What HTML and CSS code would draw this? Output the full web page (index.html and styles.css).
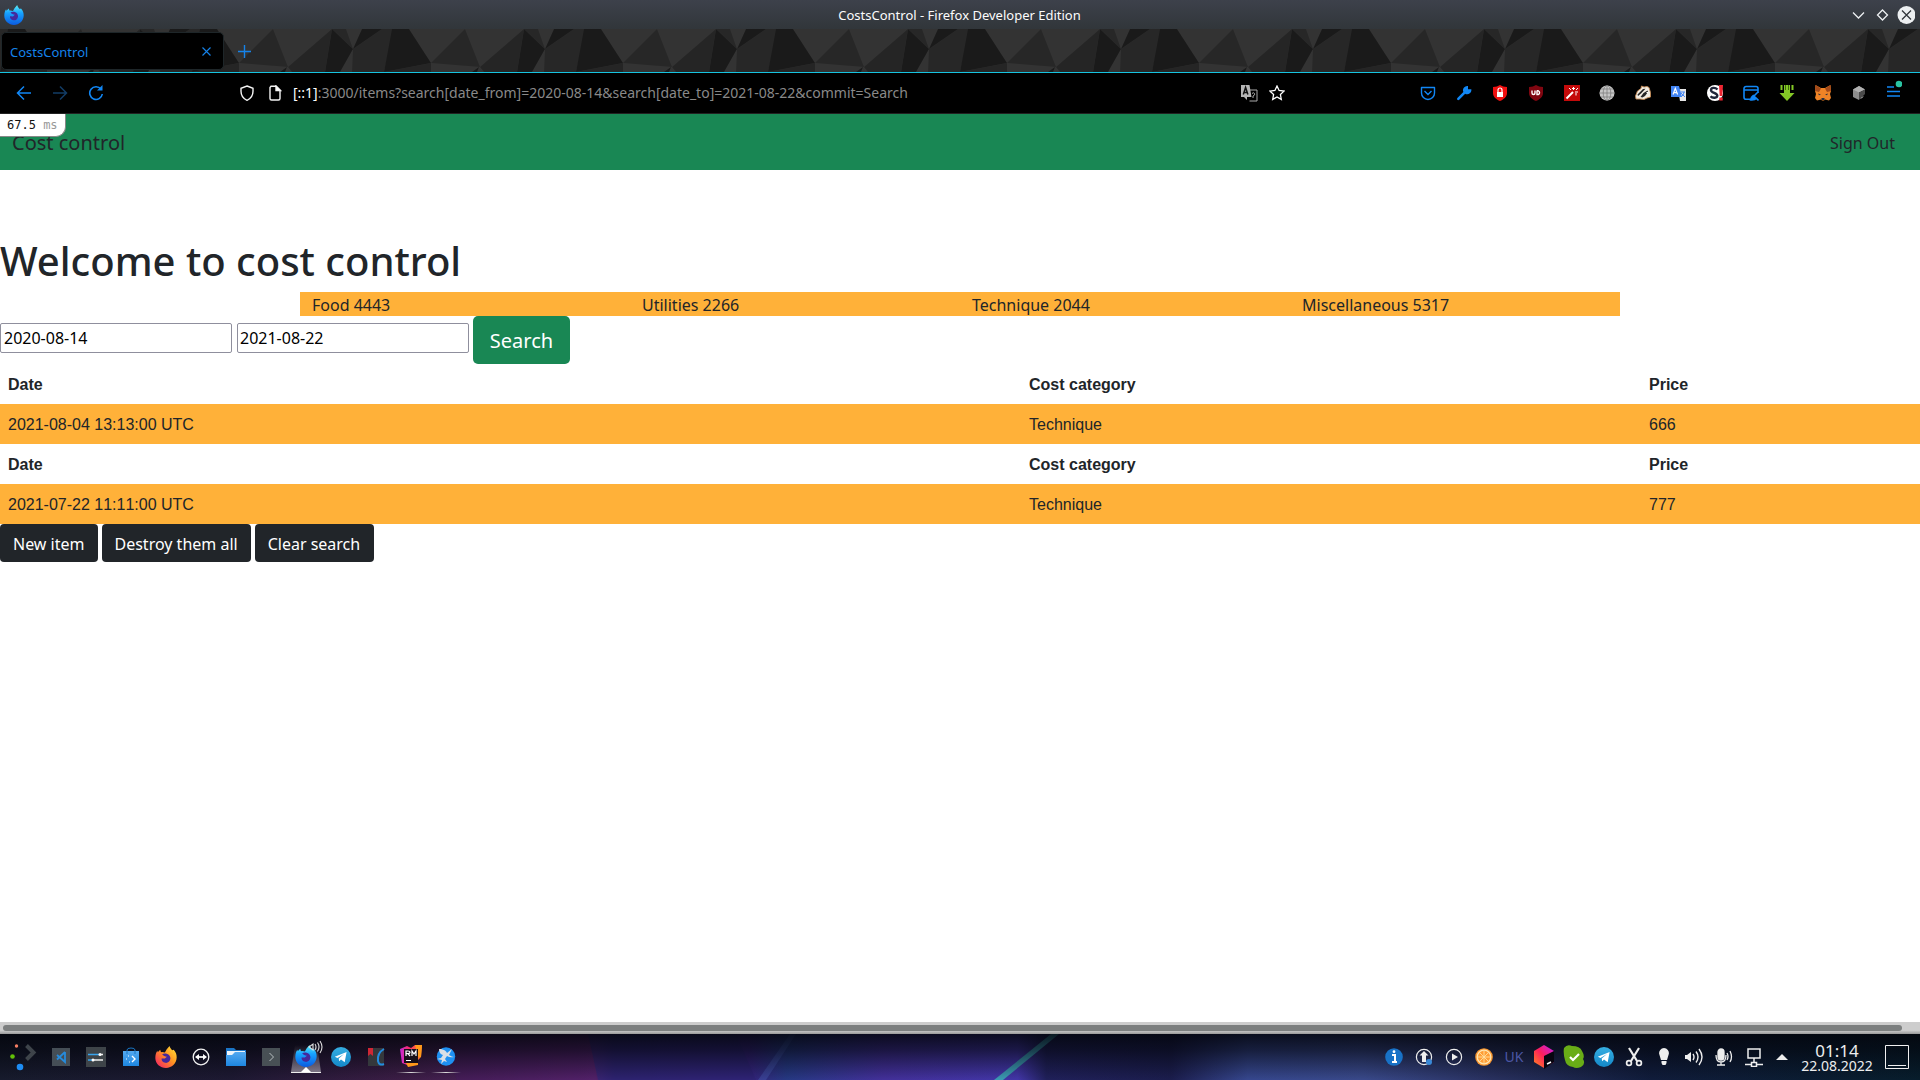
FILE: index.html
```html
<!DOCTYPE html>
<html lang="en">
<head>
<meta charset="utf-8">
<title>CostsControl</title>
<link rel="stylesheet" href="styles.css">
</head>
<body>
<svg class="defs" width="0" height="0">
  <defs>
    <linearGradient id="blueFox" x1="0" y1="0" x2="0" y2="1"><stop offset="0" stop-color="#5df0f5"/><stop offset=".4" stop-color="#17a3ff"/><stop offset="1" stop-color="#0b5be0"/></linearGradient>
    <linearGradient id="fireFox" x1="1" y1="0" x2="0" y2="1"><stop offset="0" stop-color="#ffe83c"/><stop offset=".45" stop-color="#ff9420"/><stop offset="1" stop-color="#f5156c"/></linearGradient>
    <linearGradient id="jet" x1="0" y1="1" x2="1" y2="0"><stop offset="0" stop-color="#ff8a1d"/><stop offset=".5" stop-color="#fe1f5b"/><stop offset="1" stop-color="#c21ff5"/></linearGradient>
    <linearGradient id="rm" x1="0" y1="0" x2="1" y2="0"><stop offset="0" stop-color="#c42bd8"/><stop offset=".4" stop-color="#fb2a6a"/><stop offset="1" stop-color="#ff8a25"/></linearGradient>
    <linearGradient id="tg" x1="0" y1="0" x2="0" y2="1"><stop offset="0" stop-color="#35aee2"/><stop offset="1" stop-color="#1488c8"/></linearGradient>
    <linearGradient id="folder" x1="0" y1="0" x2="0" y2="1"><stop offset="0" stop-color="#54a9f0"/><stop offset="1" stop-color="#1d86e0"/></linearGradient>
    <linearGradient id="line"><stop offset="0" stop-color="#ddd" stop-opacity="0"/><stop offset=".5" stop-color="#ddd"/><stop offset="1" stop-color="#ddd" stop-opacity="0"/></linearGradient>
    <linearGradient id="glow" x1="0" y1="0" x2="0" y2="1"><stop offset="0" stop-color="#fff" stop-opacity="0"/><stop offset="1" stop-color="#fff" stop-opacity=".4"/></linearGradient>
    <symbol id="fox" viewBox="0 0 20 20"><path d="M10.500 3.200 13.200 0c.2 1.300 1.200 2.500 2.500 3.900L17 3.500c1.800 1.900 2.800 4.200 2.700 7C19.500 16 15.300 19.900 10 19.900S.3 16 .3 10.800c0-2.700.7-4.900 1.800-6.500l.4 1.400 2.200-2.300.8 2.200c1.300-.2 2.500 0 3.500.4z"/><path d="M6.500 7.500c3-2 8 .2 7.500 4.200-.4 2.700-2.600 4-4.700 3.600-2.300-.4-3.600-2.200-3.300-4l3 .1 1.800-1.700c-1.700-.2-3.300-.6-4.300-2.200z" fill="#45279c"/></symbol>
    <symbol id="plane" viewBox="0 0 20 20"><circle cx="10" cy="10" r="10" fill="url(#tg)"/><path d="M3.800 9.800 15.600 5 13.700 15.200 10 12.600 8.200 14.300 7.700 11.600 13 7 6.500 11z" fill="#fff"/></symbol>
  </defs>
</svg>

<header class="titlebar">
  <svg class="app" width="20" height="20" fill="url(#blueFox)"><use href="#fox"/></svg>
  <span class="window-title">CostsControl - Firefox Developer Edition</span>
  <svg class="window-buttons" width="64" height="20" fill="none" stroke="#eceff1" stroke-width="1.300">
    <path d="M2 7.500l5.500 5.500 5.500-5.500M31.500 5l5 5-5 5-5-5z"/><circle cx="55.500" cy="10" r="9" fill="#eceff1" stroke="none"/><path d="M51 5.500l9 9m0-9l-9 9" stroke="#31363b"/>
  </svg>
</header>

<div class="tabstrip">
  <svg class="facets" width="1920" height="43">
    <defs>
      <pattern id="facet" width="192" height="43" patternUnits="userSpaceOnUse" patternTransform="translate(47 0)">
        <rect width="192" height="43" fill="#333"/>
        <path d="M0 34 34 0 49 38zM93 0h14l7 20zM114 20 143 0h12l-10 43h-32z" fill="#272727"/>
        <path d="M49 38 93 0 86 43H53zM145 43 192 34V43z" fill="#252525"/>
        <path d="M93 0 114 20 101 43H86zM123 0h20L114 20zM153 0h17l22 34-47 9zM41 43l7-5-2 5z" fill="#1a1a1a"/>
      </pattern>
    </defs>
    <rect width="1920" height="43" fill="url(#facet)"/>
  </svg>
  <div class="tab"><span>CostsControl</span><svg width="9" height="9" stroke="#1583ea" stroke-width="1.100"><path d="M.5.5l8 8m0-8l-8 8"/></svg></div>
  <svg class="plus" width="13" height="13" stroke="#1583ea" stroke-width="1.400"><path d="M6.500 0v13M0 6.500h13"/></svg>
</div>

<nav class="toolbar">
  <div class="history">
    <svg width="16" height="16" fill="none" stroke="#1187f5" stroke-width="1.500"><path d="M15 8H1.500M8 1.500 1.500 8 8 14.500"/></svg>
    <svg width="16" height="16" fill="none" stroke="#123c66" stroke-width="1.500"><path d="M1 8h13.500M8 1.500 14.500 8 8 14.500"/></svg>
    <svg width="16" height="16" fill="none" stroke="#1187f5" stroke-width="1.600"><path d="M13 4.200A6.300 6.300 0 1 0 14.300 9"/><path d="M9 5.500h5.500V0z" fill="#1187f5" stroke="none"/></svg>
  </div>
  <div class="address">
    <svg width="16" height="16" fill="none" stroke="#f4f4f4" stroke-width="1.400"><path d="M8 1l6 2.300v3c0 4.200-2.600 7.500-6 9-3.400-1.500-6-4.800-6-9v-3z"/></svg>
    <svg width="14" height="16" fill="none" stroke="#f4f4f4" stroke-width="1.400"><path d="M3 1.200h5l4 4v8.300a1.500 1.500 0 0 1-1.500 1.500h-7A1.500 1.500 0 0 1 2 13.500v-11z"/><path d="M8 1v4.500h4.500z" fill="#fff"/></svg>
    <span class="url"><b>[::1]</b>:3000/items?search[date_from]=2020-08-14&amp;search[date_to]=2021-08-22&amp;commit=Search</span>
    <svg width="17" height="17"><path d="M9 5h7v11H8.500" fill="none" stroke="#aaa"/><path d="M11 8.500q1.500-1.500 2.500 0t-1.500 2.500v2" fill="none" stroke="#aaa"/><path d="M0 0h8.500l2 12H6v3l-3-3H0z" fill="#b5b5b5"/><path d="M2.300 9.500 4.600 2.500l2.300 7M3.200 7.500h3" fill="none" stroke="#111" stroke-width="1.500"/></svg>
    <svg width="16" height="16" fill="none" stroke="#fff" stroke-width="1.300"><path d="M8 1l2.100 4.500 4.900.6-3.600 3.400.9 4.900L8 12l-4.300 2.400.9-4.900L1 6.100l4.900-.6z"/></svg>
  </div>
  <div class="extensions">
    <svg width="16" height="16" fill="none" stroke="#1187f5" stroke-width="1.400"><path d="M1.500 2.500h13V8a6.500 6.500 0 0 1-13 0z" stroke-linejoin="round"/><path d="M4.500 6 8 9.500 11.500 6"/></svg>
    <svg width="16" height="16"><path d="M2.300 13.900 9.500 6.700" stroke="#1187f5" stroke-width="2.600" stroke-linecap="round"/><path d="M12 4.200V1A4.300 4.300 0 0 0 7.200 6.600L9.500 9A4.300 4.300 0 0 0 15.300 4.200z" fill="#1187f5"/></svg>
    <svg width="16" height="16"><path d="M8 0c2 1.300 4 1.800 7 2v6c0 4-3.500 6.500-7 8-3.500-1.500-7-4-7-8V2c3-.2 5-.7 7-2z" fill="#f01010"/><path d="M5 7h6v5H5z" fill="#fff"/><path d="M6 7V5a2 2 0 0 1 4 0v2" fill="none" stroke="#fff" stroke-width="1.200"/></svg>
    <svg width="16" height="16"><path d="M8 0c2 1.300 4 1.800 7 2v6c0 4-3.500 6.500-7 8-3.500-1.500-7-4-7-8V2c3-.2 5-.7 7-2z" fill="#800610"/><path d="M4 5.500v2.500q0 1.500 1.500 1.500T7 8v-2.500M9 5.500v4h1.300a2 2 0 0 0 0-3.700H9" fill="none" stroke="#fff" stroke-width="1.400"/></svg>
    <svg width="16" height="16"><path fill="#c40a0a" d="M0 0h16v16H0z"/><path d="M2.500 13.500 9 7" stroke="#fff" stroke-width="2"/><path d="M9.500 2v3M8 3.500h3m1 1.500 2-2M11 7h3m-2 1v2.500M5 3l2 2" stroke="#fff"/></svg>
    <svg width="16" height="16"><circle cx="8" cy="8" r="7.500" fill="#c6c6c6"/><path d="M8 0v16M0 8h16M2 4h12M2 12h12" stroke="#777" stroke-width=".7"/><ellipse cx="8" cy="8" rx="3.800" ry="7.500" fill="none" stroke="#777" stroke-width=".7"/></svg>
    <svg width="16" height="16"><path d="M.5 11 2.500 6 6 3.500 6.500 1l2.500 1 3-.5 2 1 1.500 5v4.500L12 13l-3 1.500-4-.5-4 0z" fill="#f3ece2" stroke="#c48a55" stroke-width=".9"/><path d="M2.500 9.500 8 4l2.500-.2L6 8.500 3 11zM5.500 12l3-4 4-2.500.5 1.500L10 11l-2.500 1.500z" fill="#252525"/><path d="M11.500 7.500h1.500" stroke="#fff"/></svg>
    <svg width="16" height="16"><path d="M7 4h8v12H9z" fill="#e6e6e6"/><path d="M0 1h8l3 11H0z" fill="#4285f4"/><path d="M2 9.500 4.300 3.500 6.600 9.500M3 7.700h2.800" fill="none" stroke="#fff" stroke-width="1.200"/><path d="M9.500 7H14m-1 0q0 3-3 5m0-4 4 4" fill="none" stroke="#4285f4"/></svg>
    <svg width="16" height="16"><circle cx="8" cy="8" r="8" fill="#fff"/><path d="M10.500 4.500C8 2 4 2.500 4 5.200S10.300 7.800 10.300 10.500 5.500 13.500 3.500 11.200" fill="none" stroke="#20263a" stroke-width="2.400"/><path d="M12 0h4l-.7 11h-2.600zM12.300 12.500h3.400v3h-3.400z" fill="#ef2632"/></svg>
    <svg width="16" height="16" fill="none" stroke="#1187f5" stroke-width="1.600"><path d="M7 14.200H3A2 2 0 0 1 1 12.200V3.500a2 2 0 0 1 2-2h10a2 2 0 0 1 2 2V8M1 5h14"/><path d="M6.500 15.500q1-4.500 4-6l4 4q-3 3-8 2z" fill="#1187f5" stroke="none"/><path d="M11 11l4-4M13 13l2.500 2.500"/></svg>
    <svg width="16" height="16"><path d="M5 0h6v8h4.500L8 16 .5 8H5zM1.500 0h2v5h-2zM12.500 0h2v5h-2z" fill="#84c726"/><path d="M6.500 0v5M9.500 0v5" stroke="#3e6a0c"/></svg>
    <svg width="16" height="16"><path d="M.5 0 6 3h4l5.500-3 .5 6-1 3 1 4-2 2.500-4-1-1 1H7l-1-1-4 1L0 13l1-4-1-3z" fill="#ef8326"/><path d="M.5 0 6 3.500 4 7 0 6zM15.500 0 10 3.500 12 7l4-1z" fill="#a34a1a"/><path d="M3 8.500l3 1-2 .8zM13 8.500l-3 1 2 .8zM6.500 13h3v2h-3z" fill="#283040"/></svg>
    <svg width="16" height="16"><path d="M8 1l6 3.500-6 3V15L2 12V4.500z" fill="#8c8c8c"/><path d="M8 1l6 3.500-6 3-6-3z" fill="#b0b0b0"/><path d="M14 4.500V9l-6 6V7.500z" fill="#4a4a4a"/><path d="M10 13.500l2-2" stroke="#ddd"/></svg>
    <svg class="menu" width="18" height="22" stroke="#1187f5" stroke-width="1.500"><path d="M3 9h7M3 13.500h13M3 18h13"/><circle cx="15" cy="6" r="3.300" fill="#2ac3a2" stroke="none"/></svg>
  </div>
</nav>

<main class="page">
  <div class="profiler">67.5 <span>ms</span></div>
  <div class="navbar"><a class="brand">Cost control</a><a class="signout">Sign Out</a></div>
  <h1>Welcome to cost control</h1>
  <div class="totals"><span>Food 4443</span><span>Utilities 2266</span><span>Technique 2044</span><span>Miscellaneous 5317</span></div>
  <form class="search"><input type="text" value="2020-08-14"><input type="text" value="2021-08-22"><button type="button">Search</button></form>
  <table class="items">
    <colgroup><col class="c-date"><col class="c-category"><col></colgroup>
    <tr><th>Date</th><th>Cost category</th><th>Price</th></tr>
    <tr class="row"><td>2021-08-04 13:13:00 UTC</td><td>Technique</td><td>666</td></tr>
    <tr><th>Date</th><th>Cost category</th><th>Price</th></tr>
    <tr class="row"><td>2021-07-22 11:11:00 UTC</td><td>Technique</td><td>777</td></tr>
  </table>
  <div class="actions"><a>New item</a><a>Destroy them all</a><a>Clear search</a></div>
</main>
<div class="scrollbar"><div class="thumb"></div></div>

<footer class="taskbar">
  <svg class="wallpaper" width="1920" height="46">
    <defs>
      <linearGradient id="w1"><stop offset="0" stop-color="#171b2d"/><stop offset=".12" stop-color="#1d1932"/><stop offset=".21" stop-color="#3c1d46"/><stop offset=".31" stop-color="#5b276f"/><stop offset=".32" stop-color="#302268"/><stop offset=".39" stop-color="#34227a"/><stop offset=".41" stop-color="#263983"/><stop offset=".46" stop-color="#43309a"/><stop offset=".53" stop-color="#4236a8"/><stop offset=".545" stop-color="#20205a"/><stop offset=".61" stop-color="#1b1d4d"/><stop offset=".65" stop-color="#36478e"/><stop offset=".71" stop-color="#39498a"/><stop offset=".78" stop-color="#28305e"/><stop offset=".86" stop-color="#101c3b"/><stop offset="1" stop-color="#071d2c"/></linearGradient>
      <linearGradient id="w2" x1="0" y1="0" x2="0" y2="1"><stop offset="0" stop-color="#03050c" stop-opacity=".86"/><stop offset=".35" stop-color="#03050c" stop-opacity=".62"/><stop offset="1" stop-color="#03050c" stop-opacity="0"/></linearGradient>
    </defs>
    <rect width="1920" height="46" fill="url(#w1)"/>
    <path d="M440 0h148l10 46H457z" fill="#451961" opacity=".4"/><path d="M588 0h148l20 46H598z" fill="#2c2473" opacity=".7"/>
    <path d="M790 0h6l-30 46h-8z" fill="#4d67c0" opacity=".35"/>
    <path d="M1051 0h8l-56 46h-9z" fill="#3c9bb4"/>
    <rect width="1920" height="46" fill="url(#w2)"/>
  </svg>
  <div class="launchers">
    <svg width="28" height="28"><circle cx="6.500" cy="3" r="1.700" fill="#f67e64"/><circle cx="2.500" cy="13.500" r="2.300" fill="#62c108"/><circle cx="10" cy="24" r="3.300" fill="#1d8cf4"/><path d="M16.500 2.500l7 7-7 7" fill="none" stroke="#3e444a" stroke-width="4"/></svg>
    <div class="slot"><svg width="20" height="20"><path fill="#454e56" d="M1 1h18v18H1z"/><path d="M14 5v10L6 8M14 5 6 12.500" fill="none" stroke="#268bdc" stroke-width="1.800"/></svg></div>
    <div class="slot"><svg width="20" height="20"><path fill="#3e4449" d="M0 0h20v20H0z"/><path d="M2 7.500h11M2 13h4" stroke="#39a4ed" stroke-width="1.300"/><path d="M14 7.500h3M8 13h9" stroke="#eee" stroke-width="1.300"/><circle cx="14" cy="7.500" r="1.500" fill="#fff"/><circle cx="7" cy="13" r="1.500" fill="#fff"/></svg></div>
    <div class="slot"><svg width="20" height="20"><path fill="url(#folder)" d="M2 4h16v15H2z"/><path d="M6 7V3q0-2 4-2t4 2v4" fill="none" stroke="#1775c2"/><path d="M11 9l3 3-3 3" fill="none" stroke="#fff" stroke-width="1.400"/><path d="M7 9h1M5 12h1M8 15h1" stroke="#fff"/></svg></div>
    <div class="slot"><svg width="22" height="22" fill="url(#fireFox)"><use href="#fox"/></svg></div>
    <div class="slot"><svg width="18" height="18" fill="none" stroke="#f3f3f3" stroke-width="1.300"><circle cx="9" cy="9" r="7.800"/><path d="M5 9h8" stroke-width="1.800"/><path d="M3 9l4-3v6zM15 9l-4-3v6z" fill="#fff" stroke="none"/></svg></div>
    <div class="slot"><svg width="20" height="20"><path d="M0 1h8l2 2h10v15H0z" fill="#1b75c6"/><path d="M1 4h18v5H1z" fill="#eef4fa"/><path d="M0 8h6l3-3h11v14H0z" fill="url(#folder)"/></svg></div>
    <div class="slot"><svg width="20" height="20"><path fill="#485055" d="M1 1h18v18H1z"/><path d="M8.500 6l4 4-4 4" fill="none" stroke="#b8bfc2"/></svg></div>
    <div class="slot"><svg width="34" height="40"><path d="M6 8h22l4 27H2z" fill="url(#glow)"/><svg x="6" y="8" width="22" height="22" fill="url(#blueFox)"><use href="#fox"/></svg><path d="M2 35.500h30" stroke="#eee"/><path d="M12 35l5-5 5 5z" fill="#fff"/><path d="M20 10l4-3v6zM26 7q2 3 0 6M28.500 5.500q3 4.500 0 9M31 4q4 6 0 12" fill="none" stroke="#ddd" stroke-width="1.100"/></svg></div>
    <div class="slot"><svg width="20" height="20"><use href="#plane"/></svg></div>
    <div class="slot"><svg width="20" height="20"><path fill="#34383c" d="M2 1h16v18H2z"/><path fill="#cf2735" d="M2 1h5v8L4.500 7 2 9z"/><path d="M18 2q-7 4-6 12 1 5 6 3" fill="none" stroke="#228be0" stroke-width="2"/></svg></div>
    <div class="slot"><svg width="30" height="40"><path d="M4 12l7-3 4 2 4-3h7l-1 12-3 3v4l-8 2-8-3z" fill="url(#rm)"/><path d="M19 8h7l-1 12h-3zM10 26l12-1v3l-10 2z" fill="#ff981a"/><path fill="#170f18" d="M8 12h14v14H8z"/><path d="M10 19v-5h2q2 0 2 1.300t-2 1.400h-2m2 0 2 2.300M16 19v-5l2 3 2-3v5M10 23.500h5" fill="none" stroke="#fff" stroke-width="1.200"/><path d="M0 35h30v1H0z" fill="url(#line)"/></svg></div>
    <div class="slot"><svg width="30" height="40"><circle cx="15" cy="19.500" r="9.200" fill="#1e90f2"/><path d="M10 12q5 1 6 4l5-4-3 6q3 2 5 2-4 1-7-1l-2 3 2 3-3-1-3 3 1-4-5-1 4-1 2-3q-4-1-4-6z" fill="#d9dfe6"/><path d="M0 35h30v1H0z" fill="url(#line)"/></svg></div>
  </div>
  <div class="tray">
    <svg width="18" height="20"><circle cx="9" cy="10" r="8.800" fill="#1872c7"/><path d="M7 8h3v7m-3 0h5" fill="none" stroke="#fff" stroke-width="2"/><circle cx="9" cy="4.700" r="1.400" fill="#fff"/></svg>
    <svg width="18" height="20"><circle cx="9" cy="10" r="7.600" fill="none" stroke="#eee" stroke-width="1.200"/><path d="M9 4l4.500 4.500H11V15H7V8.500H4.500z" fill="#eee"/><circle cx="14" cy="15" r="3" fill="#3989d8"/></svg>
    <svg width="18" height="20"><circle cx="9" cy="10" r="7.600" fill="none" stroke="#eee" stroke-width="1.200"/><path d="M7 6.500v7l6-3.500z" fill="#eee"/></svg>
    <svg width="18" height="20"><circle cx="9" cy="10" r="8.800" fill="#f8962f"/><circle cx="9" cy="10" r="6.800" fill="#ff9d35" stroke="#ffe4b0" stroke-width="1.300"/><path d="M9 3v14M2 10h14M4 5l10 10M14 5 4 15" stroke="#ffe0a0" stroke-width=".9"/></svg>
    <span class="layout">UK</span>
    <svg width="20" height="24"><path d="M10 0l10 6v11l-10 6-10-6V6z" fill="url(#jet)"/><path d="M10 11l10-5v11l-10 7z" fill="#080510"/><path d="M13 19l4-2" stroke="#fff" stroke-width="1.400"/></svg>
    <svg width="22" height="24"><path d="M1 3Q4-1 9 1q8 0 10 5 3 5 1 8 3 5-2 8-5 2-8 0-7-1-8-7Q0 8 1 3z" fill="#69ad17"/><path d="M7 12l3 3 6-6" fill="none" stroke="#fff" stroke-width="2.200"/></svg>
    <svg width="20" height="20"><use href="#plane"/></svg>
    <svg width="18" height="20" fill="none" stroke="#eee"><path d="M4 1l8 13M14 1 6 14" stroke-width="2.200"/><circle cx="4" cy="16" r="2.400" stroke-width="1.700"/><circle cx="14" cy="16" r="2.400" stroke-width="1.700"/></svg>
    <svg width="12" height="20" fill="#eee"><path d="M6 1a5 5 0 0 1 4.800 6L9 13H3L1.200 7A5 5 0 0 1 6 1zM3.500 14h5v2l-1 2h-3l-1-2z"/></svg>
    <svg width="20" height="20" fill="none" stroke="#eee" stroke-width="1.400"><path d="M1 8h2l4-3v10l-4-3H1z" fill="#eee" stroke="none"/><path d="M9 7q2 3 0 6M12 4.500q4 5.500 0 11M15 2q6 8 0 16"/></svg>
    <svg width="18" height="20" fill="none" stroke="#eee" stroke-width="1.300"><rect x="3" y="2" width="6" height="11" rx="3" fill="#eee"/><path d="M1 8q0 7 5 7t5-7M6 15v3M2 18h8M12 6q2 3.500 0 7M15 4q3 6 0 11"/></svg>
    <svg width="20" height="20" fill="none" stroke="#eee" stroke-width="1.500"><path d="M4 2h12v9H4zM10 11v5M1 17.500h6m6 0h6"/><path d="M7.500 15.500h5v4h-5z"/></svg>
    <svg class="caret" width="12" height="8"><path d="M0 7l6-6 6 6z" fill="#eee"/></svg>
    <div class="clock"><span>01:14</span><small>22.08.2022</small></div>
    <svg width="24" height="26" fill="none" stroke="#f0f0f0"><path d="M.5 1.500h23v23H.5zM3 21.500h18"/></svg>
  </div>
</footer>
</body>
</html>
```

FILE: styles.css
```css
* { box-sizing: border-box; }
body { margin: 0; width: 1920px; height: 1080px; overflow: hidden; display: flex; flex-direction: column; background: #fff; color: #212529; font: 16px/24px "Noto Sans", sans-serif; }
svg { display: block; flex: none; }
.defs { position: absolute; }

.titlebar { height: 29px; flex: none; display: grid; grid-template-columns: 1fr auto 1fr; align-items: center; padding: 0 5px 0 4px; background: linear-gradient(#3d414b, #31363a); color: #fcfcfc; font-size: 13px; }
.window-buttons { justify-self: end; }

.tabstrip { height: 44px; flex: none; position: relative; display: flex; align-items: center; border-bottom: 1px solid #16c3df; }
.facets { position: absolute; left: 0; top: 0; }
.tab { position: relative; width: 223px; height: 38px; margin: 1px 0 0 1px; padding: 0 12px 0 8px; border: 1px solid #1e2629; border-radius: 5px; display: flex; align-items: center; justify-content: space-between; background: #000; color: #1583ea; font-size: 13px; }
.tab span { padding-top: 2px; }
.plus { position: relative; margin: 2px 0 0 14px; }

.toolbar { height: 41px; flex: none; display: flex; align-items: center; background: #000; border-bottom: 1px solid #222; }
.history { display: flex; gap: 20px; width: 239px; padding-left: 16px; }
.address { display: flex; align-items: center; width: 1181px; }
.address svg:nth-of-type(2) { margin: 0 11px 0 13px; }
.url { width: 948px; color: #898989; font-size: 14px; white-space: nowrap; }
.url b { color: #fff; font-weight: 400; }
.address svg:nth-of-type(4) { margin-left: 11px; }
.extensions { display: flex; align-items: center; gap: 19.900px; }
.menu { margin: -8px 0 0 -3px; }

.page { flex: 1; position: relative; min-height: 0; }
.profiler { position: absolute; left: 0; top: 0; width: 66px; height: 23px; padding-left: 7px; border: solid #888; border-width: 0 1px 1px 0; border-radius: 0 0 10px 0; background: #fff; color: #111; font: 12px/22px "DejaVu Sans Mono", monospace; }
.profiler span { color: #999; }
.navbar { height: 56px; padding: 2px 25px 0 12px; display: flex; align-items: center; justify-content: space-between; background: #198754; color: #212529; }
.brand { font-size: 20px; }
h1 { margin: 67px 0 7px; font-size: 40px; line-height: 48px; font-weight: 500; }
.totals { width: 1320px; margin: 0 auto; height: 24px; display: grid; grid-template-columns: repeat(4, 1fr); background: #ffb139; line-height: 26px; }
.totals span { padding-left: 12px; }
.search { display: flex; align-items: flex-start; height: 48px; }
.search input { width: 232px; height: 30px; margin: 7px 5px 0 0; padding: 1px 3px; border: 1px solid #8f8f9d; border-radius: 2px; color: #000; font: 16px "Noto Sans", sans-serif; }
.search input + input { margin-right: 4px; padding-left: 2px; }
.search button { width: 97px; height: 48px; padding: 0; border: 0; border-radius: 5px; background: #198754; color: #fff; font: 20px "Noto Sans", sans-serif; }
.items { width: 1920px; border-collapse: collapse; table-layout: fixed; font-family: "Liberation Sans", sans-serif; }
.c-date { width: 1021px; }
.c-category { width: 620px; }
th, td { height: 40px; padding: 9px 8px 7px; text-align: left; line-height: 24px; }
td:first-child { font-kerning: none; }
.row { background: #ffb139; }
.actions { display: flex; gap: 4px; }
.actions a { height: 38px; padding: 0 13px; border-radius: 4px; background: #212529; color: #fff; line-height: 40px; }
.actions a:last-child { padding-right: 14px; }

.scrollbar { height: 12px; flex: none; padding: 3px 18px 3px 3px; background: linear-gradient(#cdcdcd 70%, #999); }
.thumb { height: 6px; border-radius: 3px; background: #7c7f7f; }

.taskbar { height: 46px; flex: none; position: relative; display: flex; justify-content: space-between; background: #11152a; }
.wallpaper { position: absolute; left: 0; top: 0; }
.launchers, .tray { position: relative; display: flex; align-items: center; }
.launchers { padding-left: 10px; }
.launchers > svg { margin-right: 5px; }
.slot { width: 35px; flex: none; display: flex; justify-content: center; }
.tray { display: grid; grid-template-columns: repeat(13, 30px) 26px 84px 36px; justify-items: center; padding-right: 5px; color: #eee; }
.layout { color: #4c57a5; font-size: 14px; }
.clock { display: flex; flex-direction: column; align-items: center; font-size: 17px; line-height: 17px; }
.clock small { font-size: 14px; line-height: 14px; }
```
